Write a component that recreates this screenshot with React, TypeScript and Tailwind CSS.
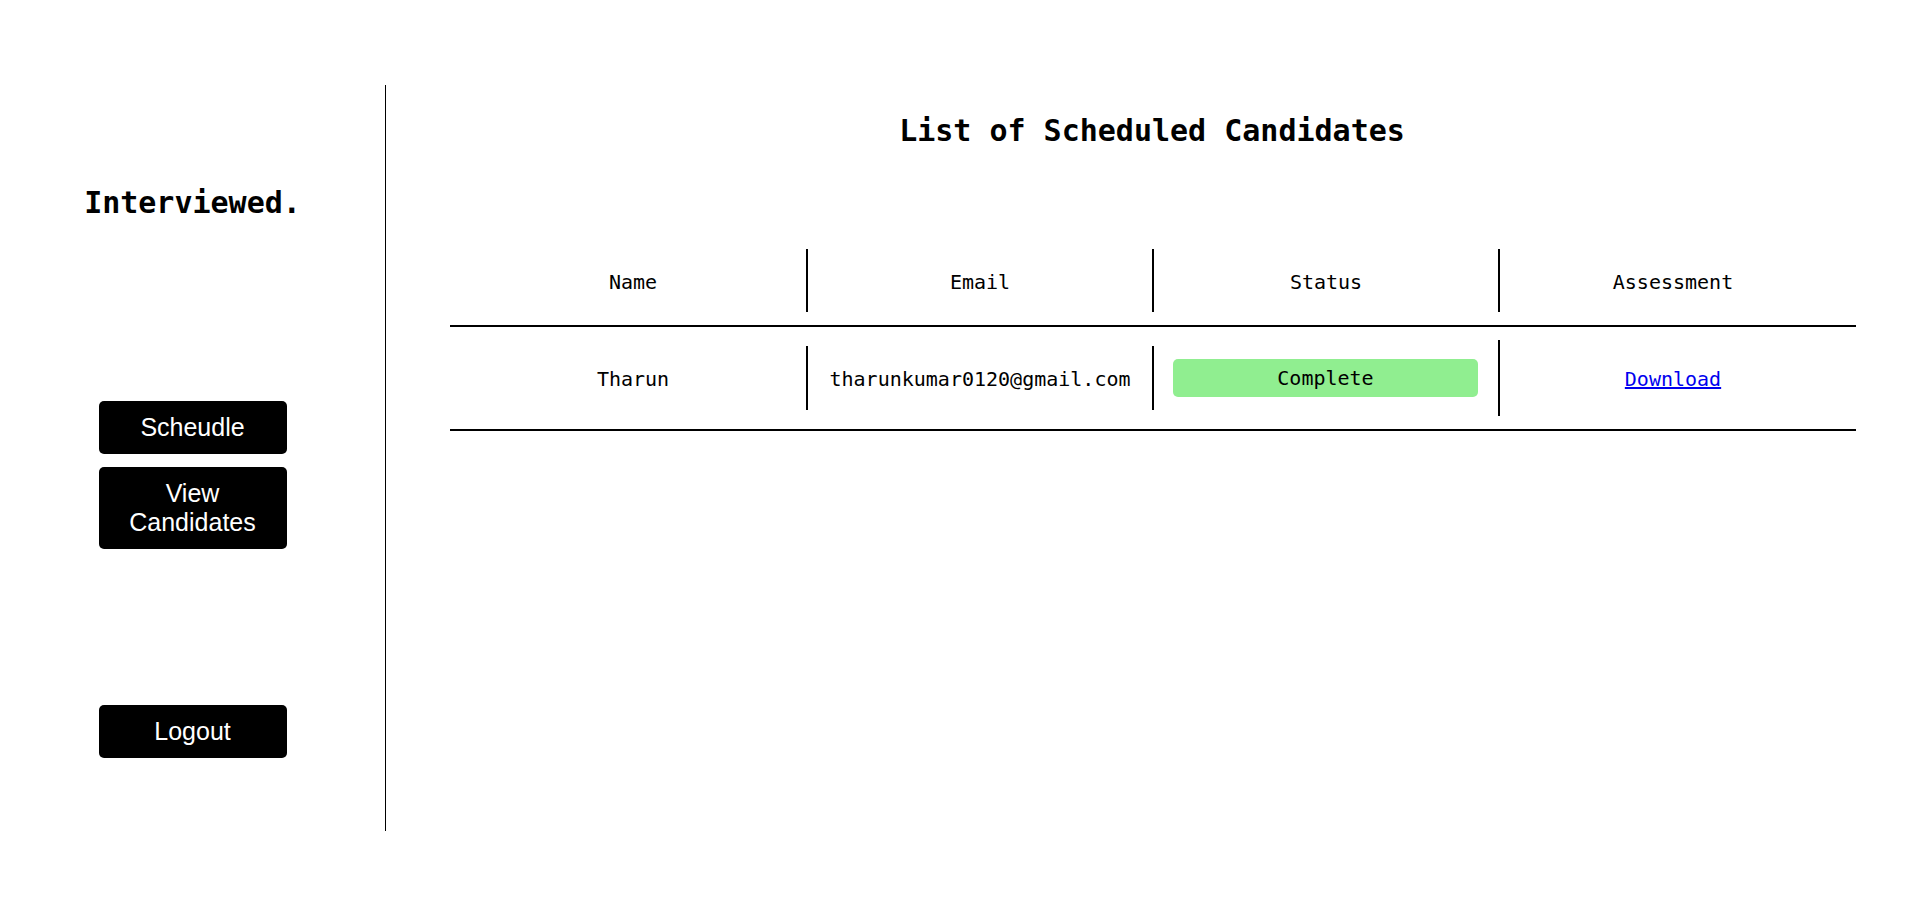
import React from 'react';

type Candidate = {
  id: string;
  name: string;
  email: string;
  status: string;
};

const candidates: Candidate[] = [
  { id: '1', name: 'Tharun', email: 'tharunkumar0120@gmail.com', status: 'Complete' }
];

function SideButton({ children, className = '' }: { children: React.ReactNode; className?: string }) {
  return (
    <button
      className={`w-[188px] py-3 bg-black text-white rounded-[5px] text-[25px] leading-[29px] font-['Liberation_Sans',Arial,sans-serif] ${className}`}
    >
      {children}
    </button>
  );
}

export default function App() {
  return (
    <div className="min-h-screen bg-white flex pt-[85px] text-black font-['DejaVu_Sans_Mono',monospace]">
      {/* Sidebar */}
      <aside className="w-[386px] h-[746px] border-r border-black flex flex-col items-center shrink-0">
        <h2 className="mt-[100px] text-[30px] leading-[36px] font-bold">Interviewed.</h2>
        <SideButton className="mt-[180px]">Scheudle</SideButton>
        <SideButton className="mt-[13px]">
          View
          <br />
          Candidates
        </SideButton>
        <SideButton className="mt-[156px]">Logout</SideButton>
      </aside>

      {/* Main */}
      <main className="flex-1 flex flex-col">
        <h1 className="mt-[28px] text-center text-[30px] leading-[36px] font-bold">
          List of Scheduled Candidates
        </h1>

        <div className="mt-[87px] ml-[64px] w-[1406px] text-[20px]">
          {/* Header */}
          <div className="flex items-center py-[13px] border-b-2 border-black">
            <div className="w-[358px] pl-[10px] pt-[22px] pb-[18px] leading-[23px] text-center border-r-2 border-black">Name</div>
            <div className="w-[346px] pt-[22px] pb-[18px] leading-[23px] text-center border-r-2 border-black">Email</div>
            <div className="w-[346px] pt-[22px] pb-[18px] leading-[23px] text-center border-r-2 border-black">Status</div>
            <div className="w-[356px] pr-[10px] pt-[22px] pb-[18px] leading-[23px] text-center">Assessment</div>
          </div>

          {/* Rows */}
          {candidates.map((c) => (
            <div key={c.id} className="flex items-center py-[13px] border-b-2 border-black">
              <div className="w-[358px] pl-[10px] pt-[21px] pb-[19px] leading-6 text-center border-r-2 border-black">{c.name}</div>
              <div className="w-[346px] pt-[21px] pb-[19px] leading-6 text-center border-r-2 border-black">{c.email}</div>
              <div className="w-[346px] pl-[19px] pr-5 py-[19px] border-r-2 border-black">
                <div className="h-[38px] pt-px leading-[37px] rounded-[5px] bg-[#90ee90] text-center">{c.status}</div>
              </div>
              <div className="w-[356px] pr-[10px] pt-[21px] pb-[19px] leading-6 text-center">
                <a href="#" className="text-[#0000ee] underline">Download</a>
              </div>
            </div>
          ))}
        </div>
      </main>
    </div>
  );
}
